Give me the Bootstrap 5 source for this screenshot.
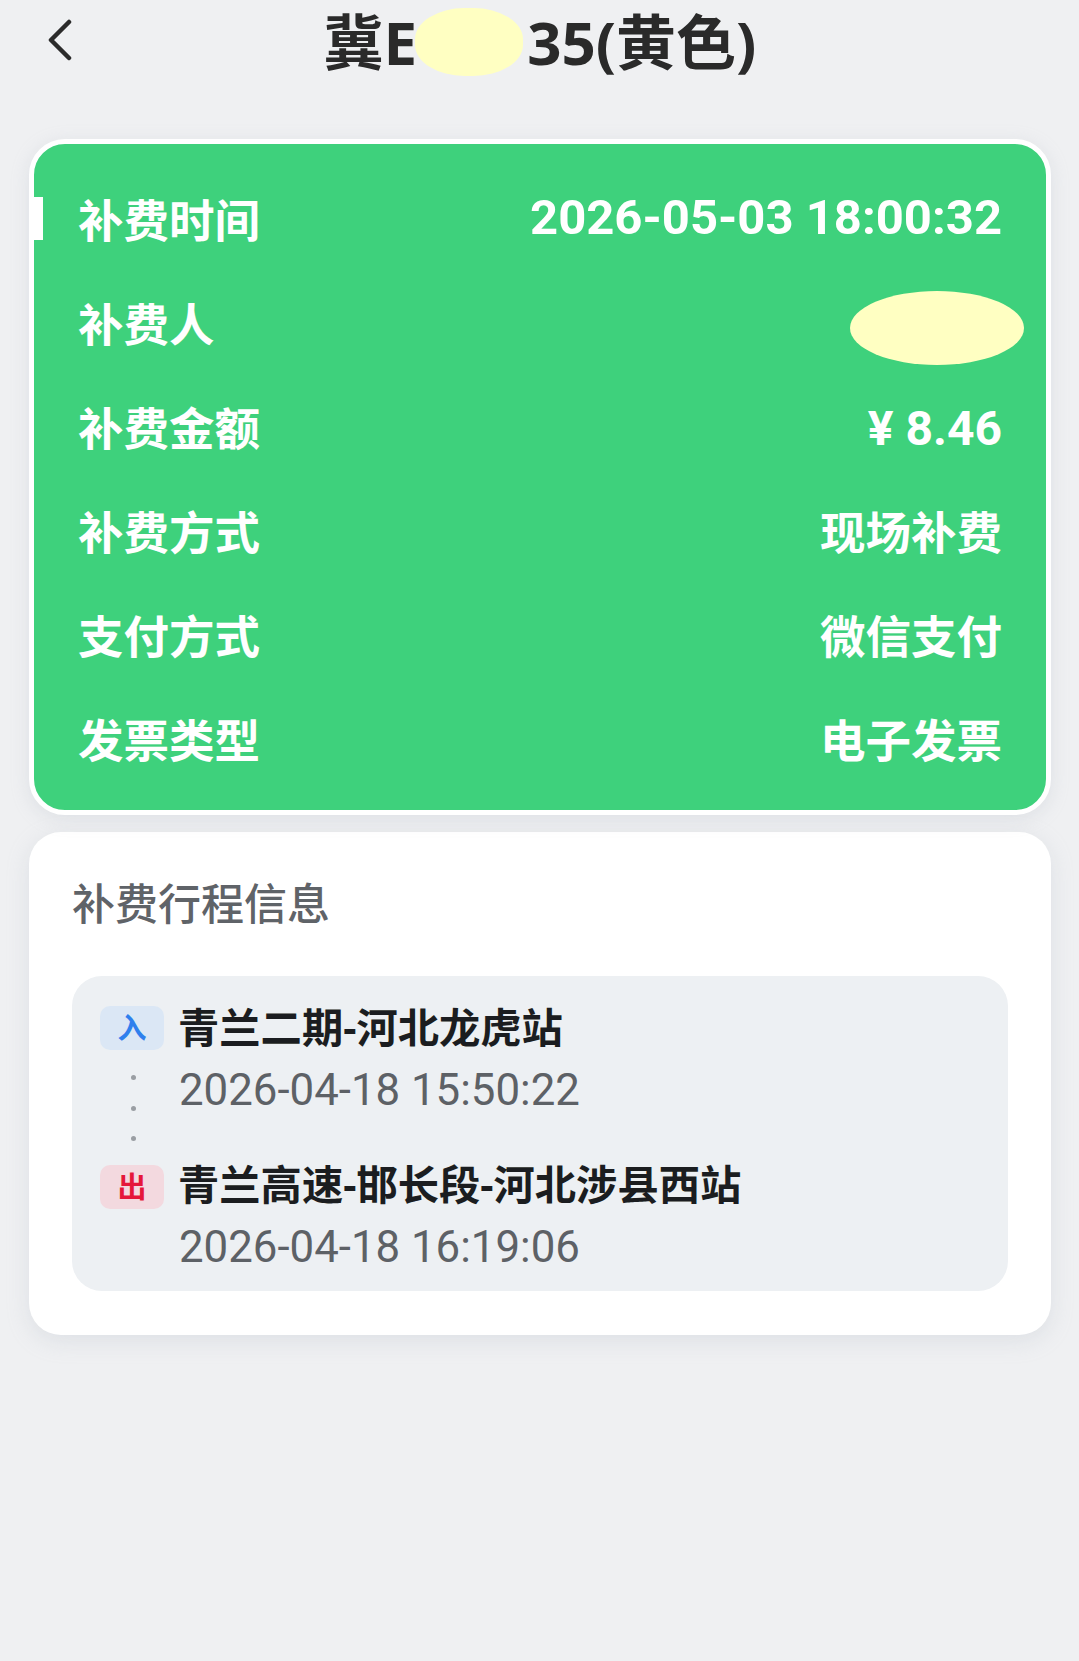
<!doctype html>
<html lang="zh">
<head>
<meta charset="utf-8">
<title>补费详情</title>
<link href="https://cdn.jsdelivr.net/npm/bootstrap@5.3.0/dist/css/bootstrap.min.css" rel="stylesheet">
<style>
html,body{height:100%}
body{background:#eff0f2;font-family:"Noto Sans","Noto Sans CJK SC",sans-serif;color:#222;height:1661px;overflow:hidden}
.shell{padding:0 28px 0 29px}
.topbar{height:139px;padding-bottom:52px}
.backlink{left:16px;top:19px;width:30px;height:42px}
.plate{font-size:60px;font-weight:700;line-height:84px;color:#2a2a2a;width:max-content;position:relative;letter-spacing:0}
.plate-gap{display:inline-block;width:110px}
.blot{background:#ffffc2;border-radius:50%}
.blot-title{left:91px;top:8px;width:108px;height:68px;border-radius:46%}
.blot-name{left:816px;top:147px;width:174px;height:74px}
.greencard{background:#3ed17c;border:5px solid #fff;border-radius:36px;color:#fff;padding:24px 44px 16px 44px;height:676px;box-shadow:0 4px 18px rgba(170,180,190,.25)}
.inforow{height:104px;font-size:45.5px;font-weight:700}
.inforow .valnum{font-family:Roboto,sans-serif;font-size:49px;position:relative;top:-2px}
.inforow .valmoney{font-size:48px;top:1px}
.tick{left:0;top:53px;width:9px;height:43px;background:#fff}
.whitecard{background:#fff;border-radius:32px;margin-top:17px;height:503px;padding:40px 43px 0;box-shadow:0 6px 22px rgba(170,180,190,.25)}
.whitetitle{font-size:43px;font-weight:500;line-height:64px;color:#5f6368;margin-bottom:40px}
.tripbox{background:#edf0f3;border-radius:30px;height:315px;padding:30px 28px 0}
.tag{width:64px;height:44px;border-radius:10px;font-size:29px;font-weight:700;flex:none;line-height:44px;text-align:center}
.tag-in{background:#dbe7f5;color:#2f80ed}
.tag-out{background:#f3d9df;color:#e5173a;margin-top:2px}
.stationname{font-size:41.3px;font-weight:700;line-height:44px;color:#1b1d20;margin-top:-1px;margin-left:-1px}
.stationtime{font-family:Roboto,sans-serif;font-size:43.8px;line-height:60px;color:#5d6166;margin-top:11px}
.tripgroup{height:157px;column-gap:15px}
.dotcol{left:59px;top:99px;width:6px;height:66px}
.dotcol i{display:block;width:5px;height:5px;border-radius:50%;background:#9a9ea3}
</style>
</head>
<body>
<div class="shell position-relative">
  <header class="topbar position-relative d-flex justify-content-center">
    <svg class="backlink position-absolute" viewBox="0 0 30 42" fill="none" stroke="#2b2b2b" stroke-width="4.5" stroke-linecap="round" stroke-linejoin="round"><path d="M24 3 6 21l18 18"/></svg>
    <div class="plate">冀E<span class="plate-gap"></span>35(黄色)<span class="blot blot-title position-absolute"></span></div>
  </header>
  <section class="greencard position-relative">
    <span class="tick position-absolute"></span>
    <div class="inforow d-flex justify-content-between align-items-center"><span>补费时间</span><span class="valnum">2026-05-03 18:00:32</span></div>
    <div class="inforow d-flex justify-content-between align-items-center"><span>补费人</span></div>
    <div class="inforow d-flex justify-content-between align-items-center"><span>补费金额</span><span class="valnum valmoney">¥ 8.46</span></div>
    <div class="inforow d-flex justify-content-between align-items-center"><span>补费方式</span><span>现场补费</span></div>
    <div class="inforow d-flex justify-content-between align-items-center"><span>支付方式</span><span>微信支付</span></div>
    <div class="inforow d-flex justify-content-between align-items-center"><span>发票类型</span><span>电子发票</span></div>
    <span class="blot blot-name position-absolute"></span>
  </section>
  <section class="whitecard">
    <div class="whitetitle">补费行程信息</div>
    <div class="tripbox position-relative">
      <div class="tripgroup d-flex">
        <span class="tag tag-in">入</span>
        <div><div class="stationname">青兰二期-河北龙虎站</div><div class="stationtime">2026-04-18 15:50:22</div></div>
      </div>
      <div class="dotcol position-absolute d-flex flex-column justify-content-between"><i></i><i></i><i></i></div>
      <div class="tripgroup d-flex">
        <span class="tag tag-out">出</span>
        <div><div class="stationname">青兰高速-邯长段-河北涉县西站</div><div class="stationtime">2026-04-18 16:19:06</div></div>
      </div>
    </div>
  </section>
</div>
<script src="https://cdn.jsdelivr.net/npm/bootstrap@5.3.0/dist/js/bootstrap.bundle.min.js"></script>
</body>
</html>
